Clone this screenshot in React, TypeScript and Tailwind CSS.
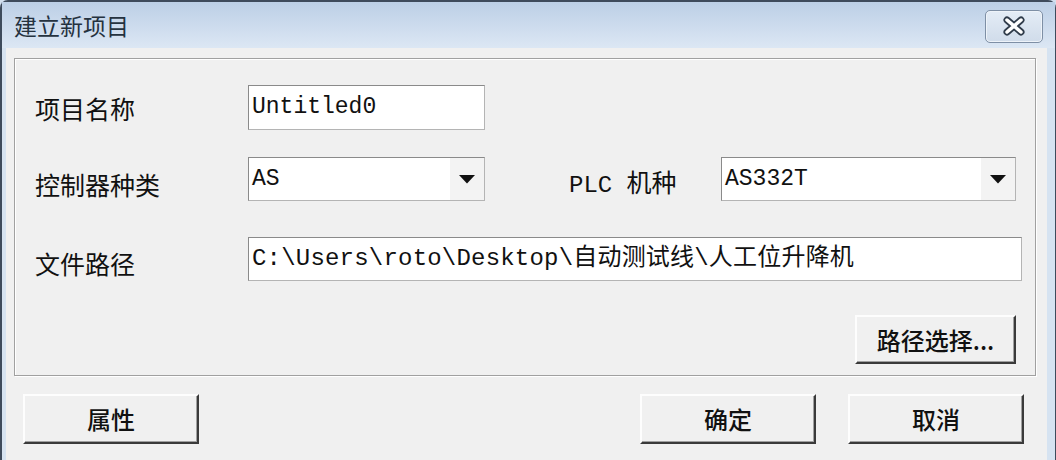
import React from 'react';

const mono = { fontFamily: '"Liberation Mono", "Noto Sans CJK SC", monospace' };
const cjk = { fontFamily: '"Noto Sans CJK SC", "Noto Sans", sans-serif' };

const TextBox: React.FC<{ value: string; className: string }> = ({ value, className }) => (
  <div
    className={`flex items-center bg-white border border-[#8a8a8a] border-b-[#b4b4b4] border-r-[#b4b4b4] pl-[3px] text-[#111] leading-none whitespace-nowrap overflow-hidden ${className}`}
    style={mono}
  >
    {value}
  </div>
);

const Combo: React.FC<{ value: string; className: string }> = ({ value, className }) => (
  <div
    className={`flex items-stretch bg-white border border-[#8a8a8a] border-b-[#b4b4b4] border-r-[#b4b4b4] ${className}`}
  >
    <div className="flex-1 flex items-center pl-[3px] text-[23px] text-[#111] leading-none" style={mono}>
      {value}
    </div>
    <div className="w-[34px] flex items-center justify-center bg-[#f3f3f3]">
      <svg width="18" height="10" viewBox="0 0 18 10">
        <path d="M1 1 L17 1 L9 9.5 Z" fill="#111" />
      </svg>
    </div>
  </div>
);

const Btn: React.FC<{ label: string; className: string }> = ({ label, className }) => (
  <button
    className={`flex items-center justify-center bg-[#f0f0f0] border-t-[2px] border-l-[2px] border-b-[2px] border-r-[2px] border-t-[#fdfdfd] border-l-[#fdfdfd] border-b-[#3a3a3a] border-r-[#3a3a3a] shadow-[inset_-1px_-1px_0_#a0a0a0] text-[24px] font-medium text-[#111] leading-none ${className}`}
    style={cjk}
  >
    {label}
  </button>
);

export default function App() {
  return (
    <div className="w-[1056px] h-[460px] overflow-hidden bg-[#d3e0ef]">
      <div className="w-[1056px] h-[470px] flex flex-col border-l-2 border-t-2 border-r border-[#3e4b5c] rounded-t-[8px] bg-[#d6e3f1]">
        {/* Title bar */}
        <div className="h-[46px] flex items-center justify-between pl-[12px] pr-[12px] bg-linear-to-b from-[#bccfe6] to-[#dce7f4]">
          <span className="text-[23px] text-[#25323f] leading-none" style={cjk}>
            建立新项目
          </span>
          <div className="w-[58px] h-[33px] mt-[2px] rounded-[5px] border border-[#7e8fa5] bg-linear-to-b from-[#e4ecf6] to-[#d0dcea] shadow-[inset_0_0_0_1px_#eef3f9] flex items-center justify-center">
            <svg width="26" height="20" viewBox="0 0 26 20">
              <path d="M6 4 L20 16 M20 4 L6 16" stroke="#2f3b4a" strokeWidth="7" strokeLinecap="round" />
              <path d="M6 4 L20 16 M20 4 L6 16" stroke="#ffffff" strokeWidth="3.5" strokeLinecap="round" />
            </svg>
          </div>
        </div>

        {/* Client area */}
        <div className="flex-1 ml-[4px] mr-[8px] bg-[#f0f0f0] pt-[10px] pl-[8px] pr-[11px]">
          {/* Group box */}
          <div className="border border-[#a0a0a0] shadow-[inset_1px_1px_0_#ffffff,1px_1px_0_#ffffff] pt-[26px] pl-[20px] pr-[13px] pb-[11px] flex flex-col">
            <div className="flex items-center h-[45px]">
              <div className="w-[213px] pt-[2px] text-[25px] text-[#111] leading-none" style={cjk}>
                项目名称
              </div>
              <TextBox value="Untitled0" className="w-[237px] h-[45px] text-[23px]" />
            </div>

            <div className="flex items-center h-[44px] mt-[27px]">
              <div className="w-[213px] pt-[10px] text-[25px] text-[#111] leading-none" style={cjk}>
                控制器种类
              </div>
              <Combo value="AS" className="w-[237px] h-[44px]" />
              <div className="w-[152px] ml-[84px] pt-[8px] text-[24px] text-[#111] leading-none whitespace-pre" style={mono}>
                PLC <span className="text-[25px]" style={cjk}>机种</span>
              </div>
              <Combo value="AS332T" className="w-[295px] h-[44px]" />
            </div>

            <div className="flex items-center h-[44px] mt-[36px]">
              <div className="w-[213px] pt-[8px] text-[25px] text-[#111] leading-none" style={cjk}>
                文件路径
              </div>
              <TextBox
                value="C:\Users\roto\Desktop\自动测试线\人工位升降机"
                className="flex-1 h-[44px] text-[24px] tracking-[0.2px]"
              />
            </div>

            <div className="flex justify-end mt-[34px] pr-[6px]">
              <Btn label="路径选择..." className="w-[161px] h-[49px]" />
            </div>
          </div>

          {/* Bottom buttons */}
          <div className="flex items-center mt-[18px] pl-[9px] pr-[12px]">
            <Btn label="属性" className="w-[176px] h-[50px]" />
            <div className="flex-1" />
            <Btn label="确定" className="w-[176px] h-[50px]" />
            <Btn label="取消" className="w-[176px] h-[50px] ml-[32px]" />
          </div>
        </div>
      </div>
    </div>
  );
}
